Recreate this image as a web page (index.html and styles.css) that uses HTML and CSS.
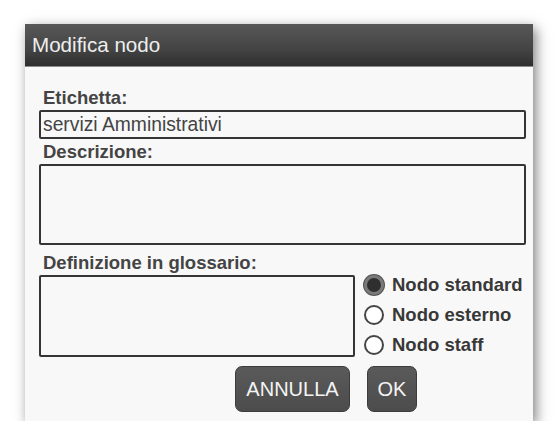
FILE: index.html
```html
<!DOCTYPE html>
<html lang="it">
<head>
<meta charset="utf-8">
<title>Modifica nodo</title>
<link rel="stylesheet" href="styles.css">
</head>
<body>
<div class="dialog">
  <div class="titlebar">Modifica nodo</div>
  <div class="content">
    <label class="label">Etichetta:</label>
    <div class="input">servizi Amministrativi</div>
    <label class="label label-desc">Descrizione:</label>
    <div class="textarea"></div>
    <label class="label label-def">Definizione in glossario:</label>
    <div class="row">
      <div class="textarea textarea-small"></div>
      <div class="radios">
        <div class="radio-row"><span class="radio checked"></span><span class="radio-text">Nodo standard</span></div>
        <div class="radio-row"><span class="radio"></span><span class="radio-text">Nodo esterno</span></div>
        <div class="radio-row"><span class="radio"></span><span class="radio-text">Nodo staff</span></div>
      </div>
    </div>
    <div class="buttons">
      <button class="btn btn-cancel">ANNULLA</button>
      <button class="btn btn-ok">OK</button>
    </div>
  </div>
</div>
</body>
</html>
```
FILE: styles.css
```css
html, body {
  margin: 0;
  padding: 0;
  background: #ffffff;
}
body {
  font-family: "Liberation Sans", Arial, sans-serif;
  padding: 24px 0 0 25px;
}
.dialog {
  width: 508px;
  height: 397px;
  background: #f8f8f8;
  box-shadow: 3px 4px 12px rgba(0, 0, 0, 0.5);
  display: flex;
  flex-direction: column;
}
.titlebar {
  height: 42px;
  line-height: 42px;
  border-bottom: 1px solid #8c8c8c;
  background: linear-gradient(#585858, #444444 60%, #2e2e2e);
  color: #eeeeee;
  font-size: 20.6px;
  padding-left: 7px;
}
.content {
  padding: 20px 7px 0 14px;
  display: flex;
  flex-direction: column;
}
.label {
  display: block;
  font-size: 18.5px;
  font-weight: bold;
  line-height: 21px;
  color: #444444;
  padding-left: 4px;
  margin-bottom: 2px;
}
.label-desc {
  margin-top: 2px;
  margin-bottom: 2px;
}
.label-def {
  margin-top: 7px;
  margin-bottom: 2px;
}
.input {
  box-sizing: border-box;
  height: 29px;
  border: 2px solid #353535;
  border-radius: 2px;
  padding: 0 2px;
  font-size: 19.3px;
  line-height: 25px;
  color: #444444;
  background: #f8f8f8;
}
.textarea {
  box-sizing: border-box;
  height: 81px;
  border: 2px solid #353535;
  border-radius: 2px;
  background: #f8f8f8;
}
.row {
  display: flex;
  align-items: flex-start;
}
.textarea-small {
  width: 316px;
  height: 82px;
}
.radios {
  margin-left: 9px;
  display: flex;
  flex-direction: column;
  gap: 10px;
}
.radio-row {
  display: flex;
  align-items: center;
  height: 20px;
}
.radio {
  box-sizing: border-box;
  width: 20px;
  height: 20px;
  border-radius: 50%;
  border: 2px solid #454545;
  background: #ffffff;
  margin-right: 8px;
}
.radio.checked {
  border: 3px solid #7a7a7a;
  background: #2f2f2f;
  box-shadow: 0 0 0 1px #555555;
}
.radio-text {
  font-size: 18.5px;
  font-weight: bold;
  color: #383838;
  line-height: 20px;
}
.buttons {
  display: flex;
  gap: 17px;
  margin-top: 9px;
  padding-left: 196px;
}
.btn {
  box-sizing: border-box;
  height: 46px;
  border: 1px solid #3c3c3c;
  border-radius: 7px;
  background: linear-gradient(#5a5a5a, #4c4c4c);
  color: #f4f4f4;
  font-family: "Liberation Sans", Arial, sans-serif;
  font-size: 20px;
  padding: 0;
}
.btn-cancel {
  width: 115px;
}
.btn-ok {
  width: 50px;
}
```
